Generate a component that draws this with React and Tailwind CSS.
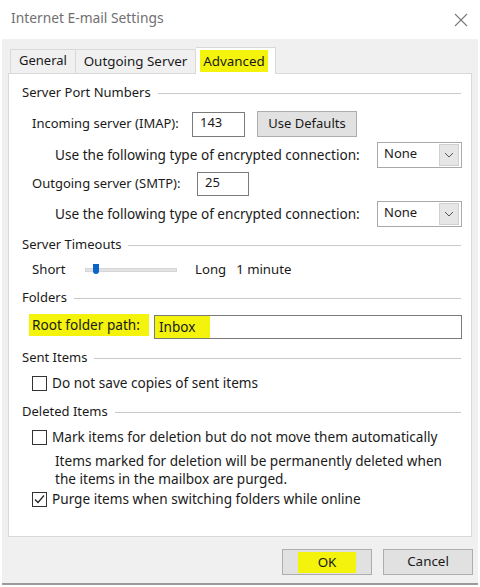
import React from "react";

const F = { fontFamily: '"Noto Sans", "Open Sans", Arial, sans-serif' };

function Heading({ children, mt }) {
  return (
    <div className={`flex items-center h-[18px] pl-[13px] pr-[10px] text-[13px] ${mt}`}>
      <span className="whitespace-nowrap">{children}</span>
      <div className="flex-1 h-px bg-[#c9c9c9] ml-[7px]" />
    </div>
  );
}

function Select({ value }) {
  return (
    <div className="ml-auto flex items-center w-[85px] h-[26px] border border-[#a9a9a9] bg-white text-[13px]">
      <span className="flex-1 pl-[6px] -mt-[2px]">{value}</span>
      <div className="w-[20px] h-[22px] mr-[2px] bg-[#e6e6e6] border border-[#d0d0d0] flex items-center justify-center">
        <svg width="10" height="6" viewBox="0 0 10 6">
          <path d="M1 1 L5 5 L9 1" fill="none" stroke="#555" strokeWidth="1" />
        </svg>
      </div>
    </div>
  );
}

function Checkbox({ checked }) {
  return (
    <div className="w-[15px] h-[15px] border border-[#333] bg-white flex items-center justify-center shrink-0">
      {checked && (
        <svg width="13" height="13" viewBox="0 0 13 13">
          <path d="M2 6.5 L5 9.5 L11 2.5" fill="none" stroke="#222" strokeWidth="1.2" />
        </svg>
      )}
    </div>
  );
}

export default function App() {
  return (
    <div className="w-[480px] h-[587px] bg-white text-[13.6px] text-[#1a1a1a] overflow-hidden flex flex-col" style={F}>
      {/* Title bar */}
      <div className="h-[39px] flex items-center justify-between pl-[11px] pr-[10px] shrink-0">
        <span className="text-[13.8px] text-[#707070] -mt-[2px]">Internet E-mail Settings</span>
        <svg width="14" height="14" viewBox="0 0 14 14" className="mr-[2px]">
          <path d="M1 1 L13 13 M13 1 L1 13" stroke="#7a7a7a" strokeWidth="1.1" />
        </svg>
      </div>

      {/* Client area */}
      <div className="mx-[2px] h-[544px] bg-[#f0f0f0] flex flex-col px-[6px] shrink-0">
        {/* Tabs */}
        <div className="flex items-end h-[34px] pl-[2px] shrink-0 text-[13px]">
          <div className="h-[24px] w-[66px] border border-b-0 border-[#d9d9d9] bg-[#f0f0f0] flex items-center justify-center">
            <span className="-mt-[1px]">General</span>
          </div>
          <div className="h-[24px] w-[120px] border border-b-0 border-l-0 border-[#d9d9d9] bg-[#f0f0f0] flex items-center justify-center text-[13.4px]">
            <span className="-mt-[1px]">Outgoing Server</span>
          </div>
          <div className="h-[27px] w-[80px] pl-[4px] border border-b-0 border-l-0 border-[#d9d9d9] bg-white flex items-center -mb-px relative z-10">
            <span className="bg-[#f3f30c] w-[68px] h-[22px] flex items-center justify-center text-[13.4px]">Advanced</span>
          </div>
        </div>

        {/* Panel */}
        <div className="h-[464px] bg-white border border-[#d9d9d9] flex flex-col shrink-0">
          <Heading mt="mt-[10px]">Server Port Numbers</Heading>

          <div className="flex items-center h-[26px] mt-[9px] pl-[23px] text-[13px]">
            <span className="w-[148px]">Incoming server (IMAP):</span>
            <div className="ml-[12px] w-[53px] h-[25px] border border-[#7a7a7a] bg-white flex items-center pl-[7px]">
              <span className="-mt-[2px]">143</span>
            </div>
            <div className="ml-[12px] w-[100px] h-[26px] border border-[#adadad] bg-[#e1e1e1] flex items-center justify-center">
              <span className="-mt-[1px]">Use Defaults</span>
            </div>
          </div>

          <div className="flex items-center h-[26px] mt-[5px] pl-[46px] pr-[9px]">
            <span>Use the following type of encrypted connection:</span>
            <Select value="None" />
          </div>

          <div className="flex items-center h-[24px] mt-[4px] pl-[23px] text-[13px]">
            <span className="w-[153px]">Outgoing server (SMTP):</span>
            <div className="ml-[12px] w-[52px] h-[24px] border border-[#7a7a7a] bg-white flex items-center pl-[7px]">
              <span className="-mt-[2px]">25</span>
            </div>
          </div>

          <div className="flex items-center h-[26px] mt-[5px] pl-[46px] pr-[9px]">
            <span>Use the following type of encrypted connection:</span>
            <Select value="None" />
          </div>

          <Heading mt="mt-[9px]">Server Timeouts</Heading>

          <div className="flex items-center h-[18px] mt-[7px] pl-[23px] text-[13.2px]">
            <span className="w-[53px]">Short</span>
            <div className="relative w-[92px] h-[4px] bg-[#e2e2e2] border border-[#d6d6d6]">
              <div className="absolute left-[7px] -top-[5px] w-[6px] h-[10px] bg-[#0a64c8] rounded-b-[3px]" />
            </div>
            <span className="ml-[18px]">Long</span>
            <span className="ml-[10px]">1 minute</span>
          </div>

          <Heading mt="mt-[10px]">Folders</Heading>

          <div className="flex items-center h-[24px] mt-[8px] pl-[20px] pr-[9px]">
            <span className="bg-[#f3f30c] w-[120px] pl-[3px] h-[22px] flex items-center -mt-[4px]">Root folder path:</span>
            <div className="ml-[5px] flex-1 h-[24px] border border-[#7a7a7a] bg-white flex items-center">
              <span className="bg-[#f3f30c] h-[22px] w-[55px] pl-[4px] flex items-center">Inbox</span>
            </div>
          </div>

          <Heading mt="mt-[10px]">Sent Items</Heading>

          <div className="flex items-center h-[18px] mt-[7px] pl-[23px] gap-[5px]">
            <Checkbox />
            <span>Do not save copies of sent items</span>
          </div>

          <Heading mt="mt-[11px]">Deleted Items</Heading>

          <div className="flex items-center h-[18px] mt-[7px] pl-[23px] gap-[5px]">
            <Checkbox />
            <span>Mark items for deletion but do not move them automatically</span>
          </div>

          <div className="flex flex-col mt-[6px] pl-[46px] leading-[18px]">
            <span>Items marked for deletion will be permanently deleted when</span>
            <span>the items in the mailbox are purged.</span>
          </div>

          <div className="flex items-center h-[18px] mt-[2px] pl-[23px] gap-[5px]">
            <Checkbox checked />
            <span>Purge items when switching folders while online</span>
          </div>
        </div>

        {/* Buttons */}
        <div className="flex justify-end gap-[11px] mt-[12px] -mr-[1px] text-[13.4px]">
          <div className="w-[90px] h-[26px] border border-[#adadad] bg-[#e1e1e1] flex items-center justify-center">
            <span className="bg-[#f3f30c] w-[58px] h-[21px] flex items-center justify-center">OK</span>
          </div>
          <div className="w-[90px] h-[26px] border border-[#adadad] bg-[#e1e1e1] flex items-center justify-center">
            <span className="-mt-[1px]">Cancel</span>
          </div>
        </div>
      </div>
      <div className="mx-[2px] h-[2px] bg-[#9a9a9a] shrink-0" />
    </div>
  );
}
